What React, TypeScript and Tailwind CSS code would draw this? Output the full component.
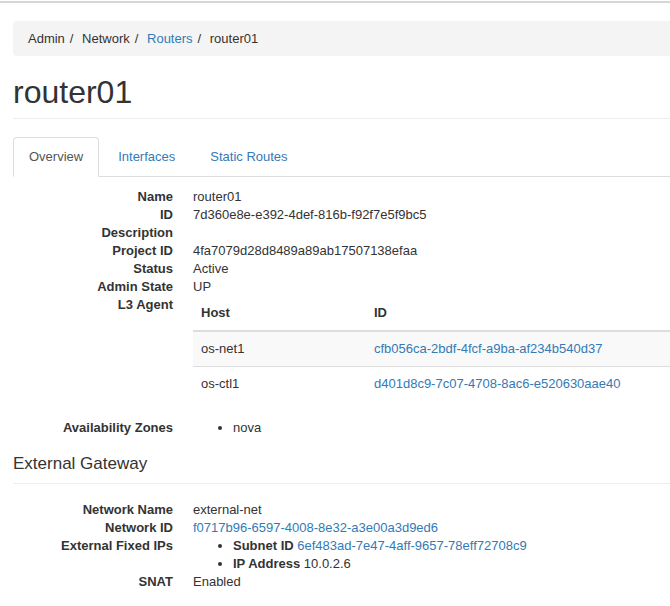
import type { ReactNode } from "react";

const LINK = "text-[#337ab7]";

function Row({ label, children }: { label: string; children?: ReactNode }) {
  return (
    <>
      <dt className="text-right font-bold">{label}</dt>
      <dd className="min-h-[18px]">{children}</dd>
    </>
  );
}

const agents = [
  { host: "os-net1", id: "cfb056ca-2bdf-4fcf-a9ba-af234b540d37" },
  { host: "os-ctl1", id: "d401d8c9-7c07-4708-8ac6-e520630aae40" },
];

export default function App() {
  return (
    <div
      className="w-[670px] h-[606px] overflow-hidden bg-white text-[13px] leading-[18px] text-[#333]"
      style={{ fontFamily: '"Liberation Sans", Arial, sans-serif' }}
    >
      <div className="h-[3px] border-b-2 border-[#d6d6d6]" />

      <div className="ml-[13px] w-[700px]">
        {/* Breadcrumb */}
        <ol className="mt-[18px] flex h-[35px] items-center rounded bg-[#f4f4f4] px-[15px]">
          <li>Admin</li>
          <li className="before:px-[5px] before:content-['/\00a0']">Network</li>
          <li className="before:px-[5px] before:text-[#333] before:content-['/\00a0']">
            <a className={LINK}>Routers</a>
          </li>
          <li className="before:px-[5px] before:content-['/\00a0']">router01</li>
        </ol>

        {/* Page header */}
        <h1 className="mt-4 border-b border-[#eee] pb-[6px] text-[32px] leading-[40px]">router01</h1>

        {/* Tabs */}
        <ul className="mt-[18px] flex border-b border-[#ddd]">
          <li className="-mb-px mr-[3px]">
            <a className="block rounded-t border border-[#ddd] border-b-white bg-white px-[15px] py-[10px] text-[#555]">
              Overview
            </a>
          </li>
          <li className="-mb-px mr-[3px]">
            <a className={`block rounded-t border border-transparent px-[15px] py-[10px] ${LINK}`}>Interfaces</a>
          </li>
          <li className="-mb-px mr-[3px]">
            <a className={`block rounded-t border border-transparent px-[15px] py-[10px] ${LINK}`}>Static Routes</a>
          </li>
        </ul>

        {/* Overview */}
        <dl className="mt-[11px] grid grid-cols-[160px_1fr] gap-x-5">
          <Row label="Name">router01</Row>
          <Row label="ID">7d360e8e-e392-4def-816b-f92f7e5f9bc5</Row>
          <Row label="Description" />
          <Row label="Project ID">4fa7079d28d8489a89ab17507138efaa</Row>
          <Row label="Status">Active</Row>
          <Row label="Admin State">UP</Row>
          <Row label="L3 Agent">
            <table className="mb-[18px] w-full border-collapse text-left">
              <thead>
                <tr>
                  <th className="w-[173px] border-b-2 border-[#ddd] px-2 py-2 font-bold">Host</th>
                  <th className="border-b-2 border-[#ddd] px-2 py-2 font-bold">ID</th>
                </tr>
              </thead>
              <tbody>
                {agents.map((a, i) => (
                  <tr key={a.id} className={i % 2 === 0 ? "bg-[#f9f9f9]" : ""}>
                    <td className="border-t border-[#ddd] px-2 py-2">{a.host}</td>
                    <td className="border-t border-[#ddd] px-2 py-2">
                      <a className={LINK}>{a.id}</a>
                    </td>
                  </tr>
                ))}
              </tbody>
            </table>
          </Row>
          <Row label="Availability Zones">
            <ul className="list-disc pl-10">
              <li>nova</li>
            </ul>
          </Row>
        </dl>

        {/* External gateway */}
        <h4 className="mt-[17px] border-b border-[#eee] pb-[9px] text-[17px] leading-[20px]">External Gateway</h4>

        <dl className="mt-[17px] grid grid-cols-[160px_1fr] gap-x-5">
          <Row label="Network Name">external-net</Row>
          <Row label="Network ID">
            <a className={LINK}>f0717b96-6597-4008-8e32-a3e00a3d9ed6</a>
          </Row>
          <Row label="External Fixed IPs">
            <ul className="list-disc pl-10">
              <li>
                <strong>Subnet ID</strong> <a className={LINK}>6ef483ad-7e47-4aff-9657-78eff72708c9</a>
              </li>
              <li>
                <strong>IP Address</strong> 10.0.2.6
              </li>
            </ul>
          </Row>
          <Row label="SNAT">Enabled</Row>
        </dl>
      </div>
    </div>
  );
}
